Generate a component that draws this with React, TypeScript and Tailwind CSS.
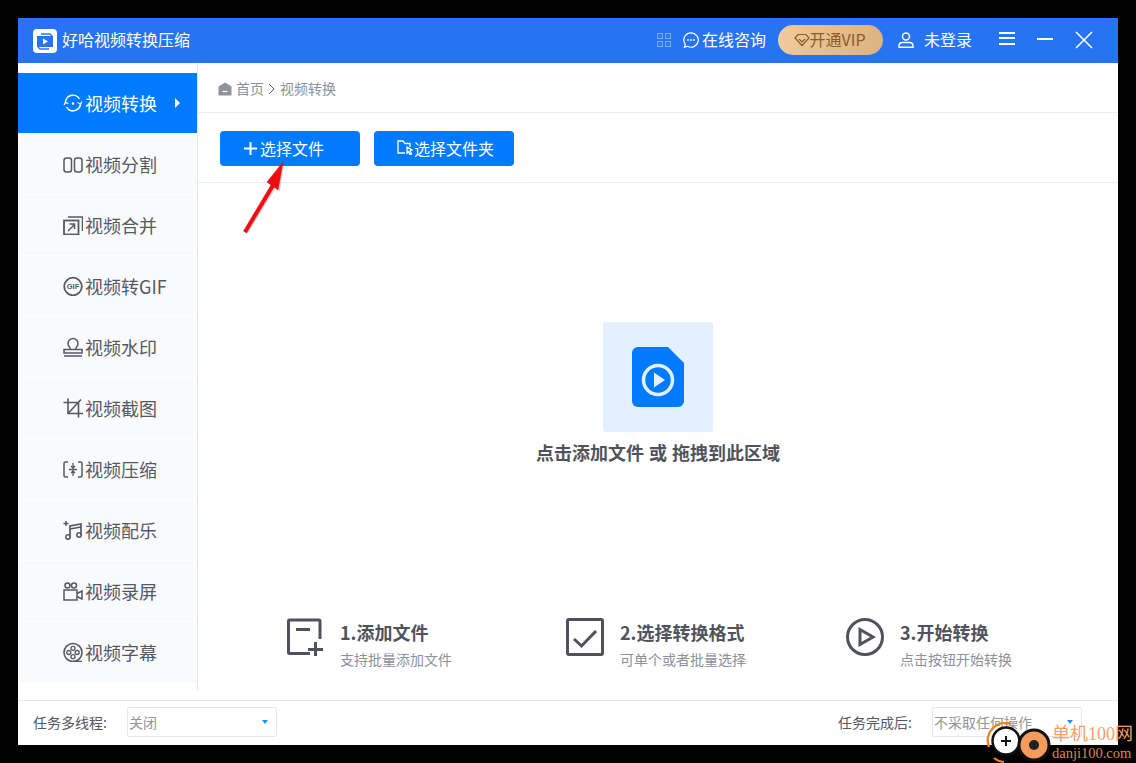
import type { ReactNode } from "react";

const font = { fontFamily: '"Noto Sans CJK SC", "Noto Sans", sans-serif' };

function Ico({ children, className = "w-5 h-5 text-[#555963]" }: { children: ReactNode; className?: string }) {
  return (
    <svg viewBox="0 0 20 20" fill="none" stroke="currentColor" strokeWidth="1.5" className={className}>
      {children}
    </svg>
  );
}

const menu: { label: string; icon: ReactNode }[] = [
  {
    label: "视频转换",
    icon: (
      <Ico className="w-5 h-5 text-white">
        <path d="M17.5 10a7.500 7.500 0 0 1-14 4M2.500 10.500a7.500 7.500 0 0 1 14-4.500" />
        <path d="M14.500 9.500l3 1.500 1.500-2.500M5.500 10.500l-3-1-1.500 2.500" strokeWidth="1.2" />
        <circle cx="10" cy="10.500" r="1.200" fill="currentColor" stroke="none" />
      </Ico>
    ),
  },
  {
    label: "视频分割",
    icon: (
      <Ico>
        <rect x="1" y="4" width="7.500" height="14" rx="2.500" />
        <rect x="11.500" y="4" width="7.500" height="14" rx="2.500" />
      </Ico>
    ),
  },
  {
    label: "视频合并",
    icon: (
      <Ico>
        <rect x="1" y="5.500" width="14.500" height="14" strokeWidth="1.800" />
        <path d="M5 2h14.500v14" />
        <path d="M5 16l6-6M6.500 9h5v5" />
      </Ico>
    ),
  },
  {
    label: "视频转GIF",
    icon: (
      <Ico>
        <circle cx="10" cy="10.500" r="8.800" strokeWidth="1.800" />
        <text x="10" y="13.300" textAnchor="middle" fontSize="7.500" fontWeight="700" fill="currentColor" stroke="none" fontFamily="Liberation Sans, sans-serif">
          GIF
        </text>
      </Ico>
    ),
  },
  {
    label: "视频水印",
    icon: (
      <Ico>
        <path d="M7.500 12.500c0-2-2.500-3-2.500-6a5 5 0 0 1 10 0c0 3-2.500 4-2.500 6" />
        <path d="M1 12.500h18v3.500H1zM1 19h18" />
      </Ico>
    ),
  },
  {
    label: "视频截图",
    icon: (
      <Ico>
        <path d="M5 0.500v15h15M0.500 4.500h15v15M5 15.500L18 1.500" strokeWidth="1.600" />
      </Ico>
    ),
  },
  {
    label: "视频压缩",
    icon: (
      <Ico>
        <path d="M5 3H2.500A1.500 1.500 0 0 0 1 4.500v12A1.500 1.500 0 0 0 2.500 18H5M15 3h2.500A1.500 1.500 0 0 1 19 4.500v12a1.500 1.500 0 0 1-1.500 1.500H15" />
        <path d="M6 10.500h8M10 4v5M8 7l2 2 2-2M10 17v-5M8 14l2-2 2 2" strokeWidth="1.300" />
      </Ico>
    ),
  },
  {
    label: "视频配乐",
    icon: (
      <Ico>
        <path d="M7 17V6l11-2v11M7 9l11-2" strokeWidth="1.700" />
        <path d="M0.500 3.500h5M3 1v5" />
        <circle cx="5" cy="17" r="2.200" />
        <circle cx="16" cy="15" r="2.200" />
      </Ico>
    ),
  },
  {
    label: "视频录屏",
    icon: (
      <Ico>
        <rect x="1" y="9" width="13" height="10" />
        <path d="M14 12.500l5-2.500v8l-5-2.500" />
        <circle cx="4.500" cy="4.500" r="2.500" />
        <circle cx="11" cy="4.500" r="2.500" />
      </Ico>
    ),
  },
  {
    label: "视频字幕",
    icon: (
      <Ico>
        <circle cx="10" cy="10.500" r="9" strokeWidth="1.600" />
        <circle cx="10" cy="6.300" r="2" strokeWidth="1.300" />
        <circle cx="10" cy="14.700" r="2" strokeWidth="1.300" />
        <circle cx="5.800" cy="10.500" r="2" strokeWidth="1.300" />
        <circle cx="14.200" cy="10.500" r="2" strokeWidth="1.300" />
        <path d="M10 19.500h9" />
      </Ico>
    ),
  },
];

const steps: { title: string; desc: string; icon: ReactNode }[] = [
  {
    title: "1.添加文件",
    desc: "支持批量添加文件",
    icon: (
      <svg viewBox="0 0 38 38" fill="none" stroke="#4f525c" strokeWidth="3" className="w-[38px] h-[38px]">
        <path d="M24 35.500H3.500a1 1 0 0 1-1-1V3a1 1 0 0 1 1-1H33a1 1 0 0 1 1 1v18" />
        <path d="M10 11.500h14M22 31.500h15M29.500 24v14" />
      </svg>
    ),
  },
  {
    title: "2.选择转换格式",
    desc: "可单个或者批量选择",
    icon: (
      <svg viewBox="0 0 38 38" fill="none" stroke="#4f525c" strokeWidth="3" className="w-[38px] h-[38px]">
        <rect x="1.500" y="1.500" width="35" height="35" rx="1.500" />
        <path d="M8 21l7.500 7L30 13" />
      </svg>
    ),
  },
  {
    title: "3.开始转换",
    desc: "点击按钮开始转换",
    icon: (
      <svg viewBox="0 0 38 38" fill="none" stroke="#4f525c" strokeWidth="3" className="w-[38px] h-[38px]">
        <circle cx="19" cy="19" r="17.500" />
        <path d="M14 11.500L27 19 14 26.500z" />
      </svg>
    ),
  },
];

function Select({ value, className }: { value: string; className: string }) {
  return (
    <div className={`flex items-center justify-between border border-[#e4e7ed] rounded-[2px] h-[30px] pl-[1px] pr-[8px] text-[14px] text-[#9095a0] ${className}`}>
      <span>{value}</span>
      <span className="w-0 h-0 border-x-[3px] border-x-transparent border-t-[4px] border-t-[#1e90ff]" />
    </div>
  );
}

export default function App() {
  return (
    <div className="relative h-[763px] w-[1136px] overflow-hidden bg-black p-[18px]" style={font}>
      <div className="flex h-[727px] w-[1100px] flex-col bg-white">
        {/* header */}
        <header className="flex h-[45px] items-center bg-[#2673f3] pl-[15px] text-white">
          <svg viewBox="0 0 24 24" className="h-6 w-6">
            <rect width="24" height="24" rx="4" fill="#fff" />
            <rect x="5" y="7" width="14" height="11" fill="#2673f3" />
            <path d="M4 7h2v11H4zM18 7h2v11h-2z" fill="#2673f3" />
            <path d="M10 9.500l5 3-5 3z" fill="#fff" />
            <path d="M8 5h9l2 2M16 20H7l-2-2" stroke="#2673f3" strokeWidth="1.400" fill="none" />
          </svg>
          <span className="-mt-[3px] ml-[5px] text-[16px] leading-none">好哈视频转换压缩</span>

          <svg viewBox="0 0 14 14" fill="none" stroke="#7fa9f5" strokeWidth="1" className="-mt-[1px] ml-[467px] h-[14px] w-[14px]">
            <rect x="0.500" y="0.500" width="5" height="5" />
            <rect x="8.500" y="0.500" width="5" height="5" />
            <rect x="0.500" y="8.500" width="5" height="5" />
            <rect x="8.500" y="8.500" width="5" height="5" />
            <path d="M3 2.500v1M11 2.500v1M3 10.500v1M11 10.500v1" />
          </svg>
          <svg viewBox="0 0 16 16" fill="none" stroke="#fff" strokeWidth="1.200" className="-mt-[2px] ml-[12px] h-4 w-4">
            <path d="M8 .8a7.200 7.200 0 1 1-3.400 13.500l-3.200 1 .9-3A7.200 7.200 0 0 1 8 .8z" />
            <circle cx="5" cy="8" r=".9" fill="#fff" stroke="none" />
            <circle cx="8" cy="8" r=".9" fill="#fff" stroke="none" />
            <circle cx="11" cy="8" r=".9" fill="#fff" stroke="none" />
          </svg>
          <span className="-mt-[3px] ml-[3px] text-[16px]">在线咨询</span>

          <div className="-mt-[1px] ml-[12px] flex h-[30px] w-[105px] items-center justify-center rounded-full bg-gradient-to-r from-[#f1c99b] to-[#dcb37e] pr-[2px] text-[16px] text-[#8a5c28]">
            <svg viewBox="0 0 16 14" fill="none" stroke="#8a5c28" strokeWidth="1.200" className="h-[14px] w-4 shrink-0">
              <path d="M4 1.500h8l3 3.500-7 7.500L1 5zM5 6l3 3 3-3" />
            </svg>
            <span className="-mt-[2px]">开通VIP</span>
          </div>

          <svg viewBox="0 0 16 16" fill="none" stroke="#fff" strokeWidth="1.400" className="-mt-[2px] ml-[15px] h-4 w-4">
            <circle cx="8" cy="4.500" r="3.500" />
            <path d="M1 15.300v-1.500a3.300 3.300 0 0 1 3.300-3.300h7.400a3.300 3.300 0 0 1 3.300 3.300v1.500z" />
          </svg>
          <span className="-mt-[3px] ml-[10px] text-[16px]">未登录</span>

          <div className="-mt-[5px] ml-[27px] flex h-[13px] w-4 flex-col justify-between">
            <span className="h-[2px] bg-white" />
            <span className="h-[2px] bg-white" />
            <span className="h-[2px] bg-white" />
          </div>
          <span className="-mt-[3px] ml-[22px] h-[2px] w-4 bg-white" />
          <svg viewBox="0 0 18 18" stroke="#fff" strokeWidth="1.500" className="-mt-[1px] ml-[22px] h-[18px] w-[18px]">
            <path d="M1 1l16 16M17 1L1 17" />
          </svg>
        </header>

        <div className="flex min-h-0 flex-1">
          {/* sidebar */}
          <div className="flex h-[627px] w-[180px] shrink-0 flex-col border-r border-[#e4e7ed] pt-[10px]">
            {menu.map((m, i) => (
              <div
                key={m.label}
                className={
                  i === 0
                    ? "relative flex h-[60px] items-center gap-[2px] bg-[#007afe] pl-[45px] text-[18px] text-white"
                    : "flex h-[60px] items-center gap-[2px] bg-[#f9fafc] pl-[45px] text-[18px] text-[#555963] mt-[1px]"
                }
              >
                {m.icon}
                <span>{m.label}</span>
                {i === 0 && (
                  <span className="absolute left-[157px] top-[25px] h-0 w-0 border-y-[5px] border-l-[5px] border-y-transparent border-l-white" />
                )}
              </div>
            ))}
          </div>

          {/* main */}
          <div className="flex min-w-0 flex-1 flex-col">
            <div className="flex h-[50px] items-center gap-[4px] border-b border-[#eceef2] pl-[20px] pt-[2px] text-[14px] text-[#8c9099]">
              <svg viewBox="0 0 14 14" className="h-[14px] w-[14px]">
                <path d="M7 .5l6.500 4v9H.5v-9z" fill="#8f939e" />
                <path d="M4.500 9.500h5" stroke="#fff" strokeWidth="1.200" />
              </svg>
              <span>首页</span>
              <svg viewBox="0 0 8 12" fill="none" stroke="#555963" strokeWidth="1" className="h-3 w-2">
                <path d="M1 1l5 5-5 5" />
              </svg>
              <span>视频转换</span>
            </div>

            <div className="flex h-[70px] items-center gap-[14px] border-b border-[#eceef2] pl-[22px] pt-[2px]">
              <button className="flex h-[35px] w-[140px] items-center justify-center gap-[3px] rounded-[4px] bg-[#007afe] pr-[12px] text-[16px] text-white">
                <svg viewBox="0 0 13 13" stroke="#fff" strokeWidth="2" className="h-[13px] w-[13px]">
                  <path d="M6.500 0v13M0 6.500h13" />
                </svg>
                <span className="-mt-[2px]">选择文件</span>
              </button>
              <button className="flex h-[35px] w-[140px] items-center justify-center gap-[1px] rounded-[4px] bg-[#007afe] pl-[3px] text-[16px] text-white">
                <svg viewBox="0 0 16 15" fill="none" stroke="#fff" strokeWidth="1.300" className="-mt-[2px] h-[15px] w-4">
                  <path d="M8 13H1V1h5l2 2.500h5V7" />
                  <path d="M10 7l5 3-2 1 1.500 3-1.500.7-1.500-3-1.500 1.500z" />
                </svg>
                <span className="-mt-[2px]">选择文件夹</span>
              </button>
            </div>

            <div className="flex flex-1 flex-col items-center pt-[139px]">
              <div className="flex h-[110px] w-[110px] items-center justify-center rounded-[3px] bg-[#e3f0ff]">
                <svg viewBox="0 0 52 60" className="h-[60px] w-[52px]">
                  <path d="M6 0h30l16 16v38a6 6 0 0 1-6 6H6a6 6 0 0 1-6-6V6a6 6 0 0 1 6-6z" fill="#007afe" />
                  <circle cx="26" cy="33" r="14.500" fill="none" stroke="#e3f0ff" strokeWidth="3.500" />
                  <path d="M22 25.500l11 7.500-11 7.500z" fill="#e3f0ff" />
                </svg>
              </div>
              <p className="mt-[6px] text-[18px] font-bold leading-[28px] text-[#50535c] [word-spacing:1px]">点击添加文件 或 拖拽到此区域</p>

              <div className="mt-[152px] grid w-full grid-cols-[280px_280px_1fr] pl-[88px]">
                {steps.map((s) => (
                  <div key={s.title} className="flex gap-[16px]">
                    {s.icon}
                    <div className="mt-[1px]">
                      <div className="text-[18px] font-bold leading-[26px] text-[#50535c]">{s.title}</div>
                      <div className="mt-[4px] text-[14px] leading-[20px] text-[#8c909c]">{s.desc}</div>
                    </div>
                  </div>
                ))}
              </div>
            </div>
          </div>
        </div>

        {/* footer */}
        <footer className="flex h-[45px] items-center justify-between border-t border-[#e4e7ed] pb-[2px] pl-[15px] pr-[36px] text-[14px] text-[#555963]">
          <div className="flex items-center gap-[20px]">
            <span>任务多线程:</span>
            <Select value="关闭" className="w-[150px]" />
          </div>
          <div className="flex items-center gap-[20px]">
            <span>任务完成后:</span>
            <Select value="不采取任何操作" className="w-[150px]" />
          </div>
        </footer>
      </div>

      {/* red arrow drawn over the page */}
      <svg viewBox="0 0 60 90" className="absolute left-[235px] top-[155px] h-[90px] w-[60px]">
        <path d="M11 78L38 32l-4-3 15-21-4 28-4-3-28 45z" fill="#000" opacity=".18" />
        <path d="M8.500 76L36 30l-4-3L48 7l-5 28-4-3-27.500 46z" fill="#f00d12" stroke="#e00b10" strokeWidth=".5" strokeLinejoin="round" />
      </svg>

      {/* site watermark */}
      <svg viewBox="0 0 66 44" className="absolute left-[986px] top-[722px] h-[44px] w-[66px]">
        <path d="M3 25A17.500 17.500 0 0 1 25 2" fill="none" stroke="#f5811f" strokeWidth="2.500" />
        <path d="M8 36a17.500 17.500 0 0 0 10 4" fill="none" stroke="#f5811f" strokeWidth="2" />
        <circle cx="20" cy="19" r="13.500" fill="#fff" stroke="#111" strokeWidth="2.500" />
        <path d="M15 19h10M20 14v10" stroke="#111" strokeWidth="2" />
        <circle cx="48" cy="23" r="15" fill="#f59c5c" stroke="#111" strokeWidth="3" />
        <circle cx="48" cy="23" r="5" fill="#222" />
      </svg>
      <div className="absolute left-[1052px] top-[721px] whitespace-nowrap text-[18px] leading-[26px] text-[#f5a066]" style={{ fontFamily: '"Liberation Serif", "Noto Sans CJK SC", serif' }}>
        单机100网
      </div>
      <div className="absolute left-[1052px] top-[744px] whitespace-nowrap text-[14.500px] leading-[18px] text-[#d98a4c]" style={{ fontFamily: '"Liberation Serif", serif' }}>
        danji100.com
      </div>
    </div>
  );
}
